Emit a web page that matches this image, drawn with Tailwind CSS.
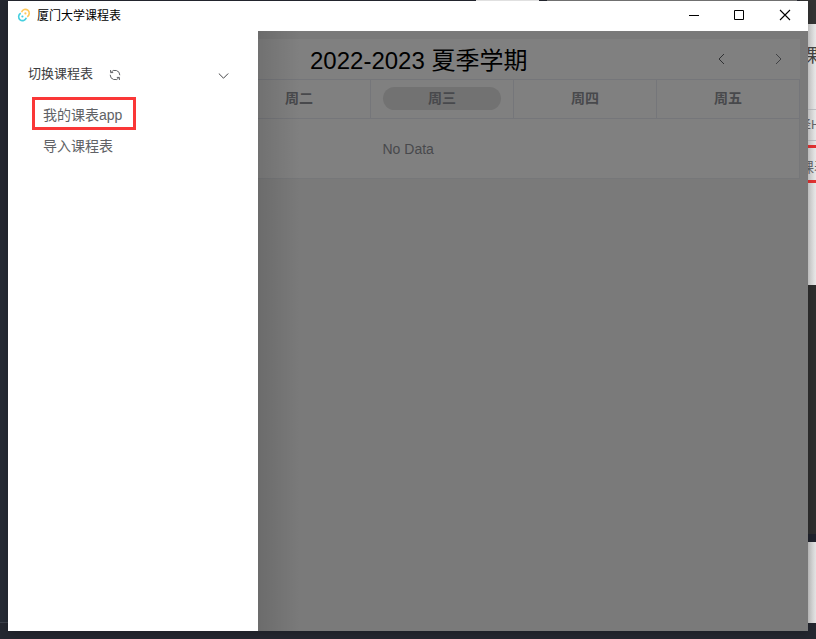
<!DOCTYPE html>
<html lang="zh-CN">
<head>
<meta charset="utf-8">
<title>厦门大学课程表</title>
<script src="https://cdn.jsdelivr.net/npm/@tailwindcss/browser@4"></script>
</head>
<body class="relative h-[639px] w-[816px] overflow-hidden bg-[#242730] font-['Liberation_Sans','Noto_Sans_CJK_SC',sans-serif]">
  <!-- desktop behind the window -->
  <div class="absolute left-0 top-[240px] h-[383px] w-2 border-b border-[#3c414b] bg-[#262b35]"></div>
  <div class="absolute left-[476px] top-0 h-px w-[63px] bg-[#eeeeee]"></div>
  <div class="absolute left-[547px] top-0 h-px w-[250px] bg-[#777777]"></div>
  <div class="absolute left-[800px] top-0 flex h-[639px] w-4 flex-col overflow-hidden">
    <div class="h-6 shrink-0 bg-[#343434]"></div>
    <div class="relative h-[261px] shrink-0 bg-linear-to-r from-[#d0d0d0] from-50% to-[#e8e8e8] text-[#444]">
      <div class="absolute left-px top-[18px] whitespace-nowrap text-[18px] leading-[28px]">课</div>
      <div class="absolute left-0 top-[85px] h-8 w-4 border-y border-[#bcbec2]"></div>
      <div class="absolute left-[-2px] top-[90px] whitespace-nowrap text-[13px] leading-[22px] text-[#66686c]">译H</div>
      <div class="absolute left-0 top-[121px] h-[38px] w-4 border-y-[3px] border-[#e23232]"></div>
      <div class="absolute left-0 top-[132px] whitespace-nowrap text-[14px] leading-[22px] text-[#66686c]">课表</div>
    </div>
    <div class="h-[249px] shrink-0 bg-[#2e2e2e]"></div>
    <div class="h-2 shrink-0 bg-[#20232d]"></div>
    <div class="h-[81px] shrink-0 bg-linear-to-r from-[#c8c8c8] from-50% to-[#e4e4e4]"></div>
    <div class="h-4 shrink-0 bg-[#242730]"></div>
  </div>

  <!-- application window -->
  <main class="absolute left-2 top-px flex h-[630px] w-[800px] flex-col bg-white shadow-[0_2px_8px_rgba(0,0,0,0.2)]">
    <header class="flex h-[30px] shrink-0 items-center">
      <svg class="relative -top-px ml-[9px] size-[14px]" viewBox="0 0 14 14" fill="none">
        <path d="M4.6 4.2A3.9 3.9 0 1 1 10.2 8.7" stroke="#ffc95c" stroke-width="1.6"/>
        <path d="M9.3 9.8A3.9 3.9 0 1 1 3.7 5.3" stroke="#45cfdf" stroke-width="1.6"/>
        <circle cx="8.4" cy="5.4" r="1.1" fill="#ffc95c"/>
        <circle cx="5.4" cy="8.5" r="1.1" fill="#45cfdf"/>
      </svg>
      <h1 class="ml-[6px] text-[12px] leading-[18px] text-black">厦门大学课程表</h1>
      <div class="ml-auto flex h-full">
        <svg class="h-[30px] w-[46px]" viewBox="0 0 46 30"><path d="M18 14.5h10" stroke="#000"/></svg>
        <svg class="h-[30px] w-[45px]" viewBox="0 0 45 30"><path d="M17.5 9.5h9v9h-9z" fill="none" stroke="#000"/></svg>
        <svg class="h-[30px] w-[46px]" viewBox="0 0 46 30"><path d="M18 9l10 10M28 9L18 19" stroke="#000" stroke-width="1.1"/></svg>
      </div>
    </header>
    <div class="flex min-h-0 flex-1">
      <nav class="w-[250px] shrink-0 bg-white">
        <div class="mt-[31px] flex h-[24px] items-center pl-5 text-[#3c3d40]">
          <span class="text-[13px] leading-[24px]">切换课程表</span>
          <svg class="relative top-px ml-[16px] size-[12px]" viewBox="0 0 12 12" fill="none" stroke="#606266">
            <path d="M1.6 1v2.6h2.6M1.9 3.6A4.8 4.8 0 0 1 10.8 6.2M10.4 11V8.4H7.8M10.1 8.4A4.8 4.8 0 0 1 1.2 5.8"/>
          </svg>
          <svg class="relative top-[2px] ml-auto mr-[29px] h-[6px] w-[11px]" viewBox="0 0 11 6" fill="none" stroke="#303133" stroke-width=".9"><path d="M.8.5l4.7 4.7L10.2.5"/></svg>
        </div>
        <ul class="text-[14px] text-[#606266]">
          <li class="ml-6 mt-[11px] flex h-[33px] w-[104px] items-center whitespace-nowrap border-[3px] border-[#fa3737] pl-2 pt-[3px] leading-[24px]">我的课表app</li>
          <li class="ml-[35px] mt-[4px] leading-[24px]">导入课程表</li>
        </ul>
      </nav>
      <section class="relative flex-1 bg-[#7a7a7a] pt-2">
        <div class="w-[542px] bg-[#808080]">
          <div class="flex h-10 items-center text-black">
            <h2 class="ml-[52px] mt-[4px] whitespace-nowrap text-[24px] leading-[36px]">2022-2023 夏季学期</h2>
            <svg class="ml-auto h-3 w-[7px]" viewBox="0 0 7 12" fill="none" stroke="#303133"><path d="M6 1L1 6l5 5"/></svg>
            <svg class="ml-[50px] mr-[18px] h-3 w-[7px]" viewBox="0 0 7 12" fill="none" stroke="#404144"><path d="M1 1l5 5-5 5"/></svg>
          </div>
          <div class="flex h-10 border-y border-[#75767a] text-center text-[14px] font-bold leading-[23px] text-[#48494c]">
            <div class="w-[113px] border-r border-[#75767a] pl-[27px] pt-[7px] text-left">周二</div>
            <div class="w-[143px] border-r border-[#75767a] px-3 pt-[7px]"><div class="h-[23px] rounded-full bg-[#727272]">周三</div></div>
            <div class="w-[143px] border-r border-[#75767a] px-3 pt-[7px]">周四</div>
            <div class="w-[143px] border-r border-[#75767a] px-3 pt-[7px]">周五</div>
          </div>
          <div class="h-[60px] border-b border-r border-[#767779] pl-[124.5px] pt-[18px] text-[14px] leading-6 text-[#48494c]">No Data</div>
        </div>
        <div class="absolute inset-y-0 left-0 w-[42px] bg-linear-to-r from-black/12 to-transparent"></div>
      </section>
    </div>
  </main>
</body>
</html>
